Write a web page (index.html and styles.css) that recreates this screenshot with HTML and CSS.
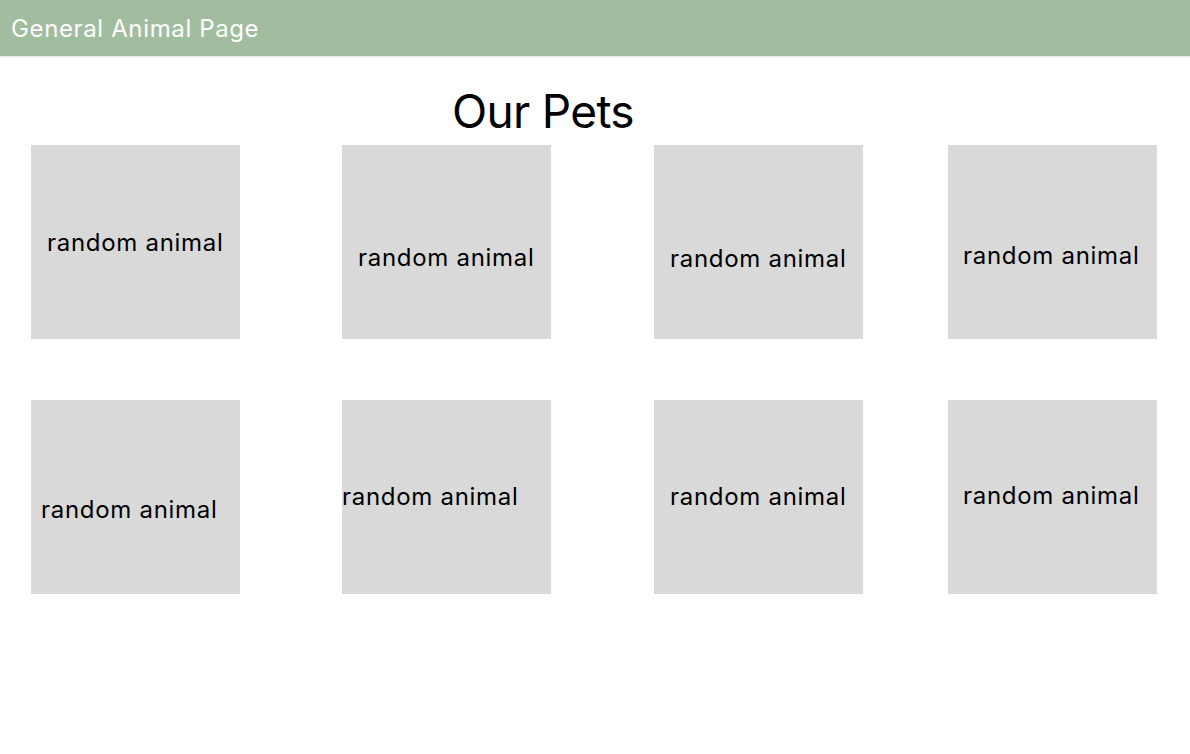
FILE: index.html
```html
<!DOCTYPE html>
<html lang="en">
<head>
<meta charset="utf-8">
<title>General Animal Page</title>
<link rel="stylesheet" href="styles.css">
</head>
<body>
<header class="topbar">
  <span class="brand">General Animal Page</span>
</header>
<main class="content">
  <h1 class="title">Our Pets</h1>
  <section class="grid">
    <div class="card c1"><span class="label">random animal</span></div>
    <div class="card c2"><span class="label">random animal</span></div>
    <div class="card c3"><span class="label">random animal</span></div>
    <div class="card c4"><span class="label">random animal</span></div>
    <div class="card c5"><span class="label">random animal</span></div>
    <div class="card c6"><span class="label">random animal</span></div>
    <div class="card c7"><span class="label">random animal</span></div>
    <div class="card c8"><span class="label">random animal</span></div>
  </section>
</main>
</body>
</html>
```
FILE: styles.css
```css
* { box-sizing: border-box; }
html, body { margin: 0; padding: 0; background: #ffffff; }
body {
  font-family: Inter, "Noto Sans", sans-serif;
  color: #000;
  width: 1190px;
  height: 754px;
  overflow: hidden;
}
.topbar {
  height: 56px;
  background: #a2bc9f;
  display: flex;
  align-items: center;
  padding-left: 11px;
  box-shadow: 0 1px 1px rgba(0,0,0,0.08);
}
.brand {
  color: #ffffff;
  font-size: 24px;
  line-height: 29px;
  font-weight: 400;
  letter-spacing: 0.63px;
}
.content { padding-top: 27px; }
.title {
  margin: 0 0 0 452px;
  font-size: 46px;
  line-height: 56px;
  font-weight: 400;
  letter-spacing: -0.7px;
}
.grid {
  margin-top: 6px;
  padding-left: 31px;
  display: grid;
  grid-template-columns: 311px 312px 294px 209px;
  grid-auto-rows: 194px;
  row-gap: 61px;
}
.card {
  width: 209px;
  height: 194px;
  background: #d9d9d9;
  display: flex;
  flex-direction: column;
}
.label {
  font-size: 24px;
  line-height: 29px;
  white-space: nowrap;
  letter-spacing: 0.7px;
}
.c1 { padding: 83px 0 0 16px; }
.c2 { padding: 98px 0 0 16px; }
.c3 { padding: 99px 0 0 16px; }
.c4 { padding: 96px 0 0 15px; }
.c5 { padding: 95px 0 0 10px; }
.c6 { padding: 82px 0 0 0; }
.c7 { padding: 82px 0 0 16px; }
.c8 { padding: 81px 0 0 15px; }
```
